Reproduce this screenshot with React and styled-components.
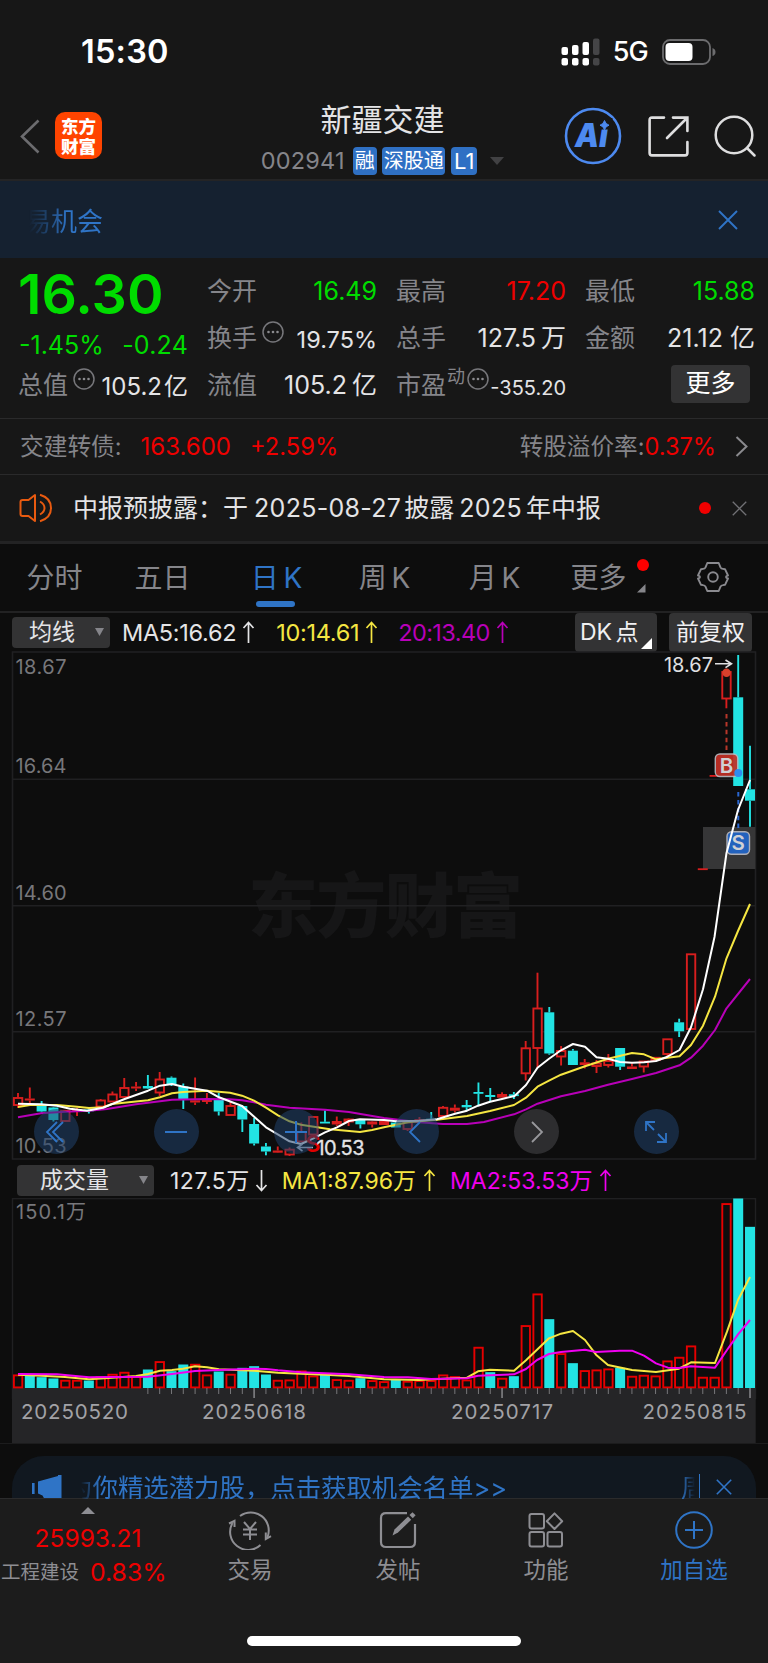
import React from 'react';
import styled, { createGlobalStyle } from 'styled-components';

const C = {
  green: '#00dc00',
  red: '#ee0000',
  grey: '#85858a',
  light: '#e4e4e6',
  blue: '#2f74c6',
  cyan: '#22e3e3',
  yellow: '#f5e642',
  purple: '#b800b8',
  magenta: '#f000f0',
};

const Global = createGlobalStyle`
  * { box-sizing: border-box; }
  body { margin: 0; background: #0d0d0d; }
  svg { display: block; flex: none; }
`;

const Page = styled.div`
  width: 768px;
  height: 1663px;
  overflow: hidden;
  display: flex;
  flex-direction: column;
  background: #0d0d0d;
  font-family: Inter, 'Noto Sans CJK SC', sans-serif;
  color: ${C.light};
`;

const Text = styled.span`
  display: block;
  flex: none;
  white-space: nowrap;
  font-size: ${(p) => p.$size}px;
  line-height: ${(p) => p.$line || 32}px;
  height: ${(p) => p.$line || 32}px;
  font-weight: ${(p) => p.$weight || 400};
  color: ${(p) => p.$color || C.light};
  letter-spacing: ${(p) => p.$ls || 0}px;
  margin: ${(p) => p.$margin || 0};
`;

/* ---------- status bar ---------- */
const StatusBar = styled.div`
  flex: none;
  height: 103px;
  padding: 0 51px 0 81px;
  display: flex;
  align-items: center;
  justify-content: space-between;
  background: #171717;
`;
const StatusIcons = styled.div`
  display: flex;
  align-items: center;
`;

/* ---------- header ---------- */
const Header = styled.div`
  flex: none;
  height: 78px;
  display: grid;
  grid-template-columns: 236px 293px 1fr;
  background: #171717;
  border-bottom: 2px solid #242425;
`;
const HeaderSide = styled.div`
  height: 66px;
  display: flex;
  align-items: center;
  gap: ${(p) => p.$gap}px;
  padding-left: ${(p) => p.$left}px;
`;
const Logo = styled.div`
  width: 47px;
  height: 47px;
  margin-top: -1px;
  border-radius: 10px;
  background: #ff4400;
  display: flex;
  flex-direction: column;
  align-items: center;
  padding-top: 4px;
  color: #fff;
  font: 900 17.5px/19.5px 'Noto Sans CJK SC', sans-serif;
`;
const TitleBlock = styled.div`
  display: flex;
  flex-direction: column;
  align-items: center;
`;
const CodeRow = styled.div`
  display: flex;
  align-items: center;
  height: 28px;
  margin-top: 11px;
`;
const Tag = styled.span`
  display: block;
  height: 28px;
  width: ${(p) => p.$w}px;
  border-radius: 4px;
  background: #2f70c4;
  color: #fff;
  text-align: center;
  font-size: ${(p) => p.$size || 20}px;
  line-height: 28px;
  margin-left: ${(p) => p.$left}px;
  overflow: hidden;
  white-space: nowrap;
`;

/* ---------- banner ---------- */
const Banner = styled.div`
  flex: none;
  height: 77px;
  padding: 0 30px 0 25px;
  display: flex;
  align-items: center;
  justify-content: space-between;
  background: #152130;
`;
const FadeText = styled.div`
  font-size: 26px;
  line-height: 36px;
  margin-top: 4px;
  color: ${C.blue};
  mask-image: linear-gradient(90deg, transparent 4px, rgba(0, 0, 0, 0.4) 22px, #000 42px);
`;

/* ---------- quote ---------- */
const Quote = styled.div`
  flex: none;
  height: 160px;
  padding: 9px 13px 0 19px;
  display: grid;
  grid-template-columns: repeat(4, 169px);
  column-gap: 20px;
  grid-template-rows: repeat(3, 47px);
  background: #171717;
`;
const PriceCell = styled.div`
  grid-row: span 2;
`;
const ChangeRow = styled.div`
  display: flex;
  justify-content: space-between;
  margin-top: 8px;
`;
const Cell = styled.div`
  display: flex;
  align-items: center;
  justify-content: space-between;
`;
const Label = styled.div`
  display: flex;
  align-items: center;
  font-size: 25px;
  line-height: 32px;
  color: ${C.grey};
  white-space: nowrap;
  margin-left: -1px;
`;
const Value = styled.div`
  display: flex;
  gap: ${(p) => p.$gap}px;
  margin-top: ${(p) => p.$drop || 0}px;
`;
const MoreButton = styled.div`
  width: 79px;
  height: 38px;
  margin: -2px 5px 0 auto;
  border-radius: 4px;
  background: #333334;
  color: #fff;
  font-size: 25px;
  line-height: 37px;
  text-align: center;
`;

const InfoRow = styled.div`
  flex: none;
  height: ${(p) => p.$h}px;
  border-top: 1px solid #2a2a2b;
  display: flex;
  align-items: center;
  padding: 0 ${(p) => p.$right}px 0 19px;
  background: #171717;
`;
const Grow = styled.div`
  flex: 1;
`;
const Spacer = styled.div`
  flex: none;
  width: ${(p) => p.$w}px;
`;

/* ---------- tabs ---------- */
const Tabs = styled.div`
  flex: none;
  height: 72px;
  border-top: 3px solid #232324;
  border-bottom: 2px solid #222223;
  display: grid;
  grid-template-columns: 109px 107px 121px 95px 125px 83px 1fr;
  background: #0d0d0d;
`;
const Tab = styled.div`
  position: relative;
  text-align: center;
  font-size: 28px;
  line-height: 68px;
  height: 67px;
  white-space: nowrap;
  word-spacing: -3px;
  color: ${(p) => (p.$on ? C.blue : C.grey)};
  &::after {
    content: '';
    display: ${(p) => (p.$on ? 'block' : 'none')};
    position: absolute;
    left: 50%;
    bottom: 4px;
    width: 39px;
    height: 6px;
    margin-left: -21px;
    border-radius: 3px;
    background: ${C.blue};
  }
`;
const TabExtras = styled.div`
  display: flex;
  margin-left: -4px;
  gap: 47px;
`;

/* ---------- indicator bars ---------- */
const IndicatorBar = styled.div`
  flex: none;
  height: 38px;
  display: flex;
  align-items: center;
  padding: ${(p) => p.$top || 0}px 16px 0 ${(p) => p.$left}px;
`;
const Picker = styled.div`
  flex: none;
  width: ${(p) => p.$w}px;
  height: 31px;
  border-radius: 4px;
  background: #333334;
  display: flex;
  align-items: center;
  justify-content: space-between;
  padding: 0 6px 0 ${(p) => p.$pad}px;
`;
const Chip = styled.div`
  flex: none;
  position: relative;
  width: ${(p) => p.$w}px;
  height: 39px;
  margin-left: ${(p) => p.$left || 0}px;
  border-radius: 4px;
  background: #333334;
  color: #f0f0f2;
  font-size: 23px;
  line-height: 39px;
  word-spacing: -3px;
  padding-left: ${(p) => p.$pad}px;
  white-space: nowrap;
  svg {
    position: absolute;
    right: 5px;
    bottom: 3px;
  }
`;

/* ---------- chart ---------- */
const ChartWrap = styled.div`
  flex: none;
  position: relative;
  height: ${(p) => p.$h}px;
`;
const Controls = styled.div`
  position: absolute;
  left: 33.5px;
  top: 458px;
  display: flex;
  gap: 75px;
`;
const Round = styled.div`
  width: 45px;
  height: 45px;
  border-radius: 50%;
  background: ${(p) => (p.$off ? 'rgba(48,48,50,.94)' : 'rgba(32,66,108,.55)')};
  display: flex;
  align-items: center;
  justify-content: center;
`;

/* ---------- bottom ---------- */
const AdSlot = styled.div`
  flex: none;
  height: 55px;
  border-top: 1px solid #1c1c1d;
  padding: 12px 12px 0;
`;
const Ad = styled.div`
  height: 43px;
  border-radius: 32px 32px 0 0;
  background: #111820;
  display: flex;
  align-items: flex-start;
  padding: 14px 24px 0 19px;
  overflow: hidden;
`;
const AdText = styled.div`
  height: 36px;
  flex: none;
  width: ${(p) => p.$w}px;
  margin-left: ${(p) => p.$left || 0}px;
  overflow: hidden;
  display: flex;
  font-size: 25.4px;
  line-height: 36px;
  white-space: nowrap;
  color: ${C.blue};
  justify-content: ${(p) => (p.$end ? 'flex-start' : 'flex-end')};
  mask-image: ${(p) =>
    p.$end ? 'linear-gradient(90deg,#000,transparent)' : 'linear-gradient(90deg,transparent,#000 18px)'};
`;
const Divider = styled.div`
  width: 1px;
  height: 30px;
  background: ${C.blue};
  margin: 4px 16px 0 4px;
`;
const AdClose = styled.div`
  margin-top: 9px;
`;
const BottomBar = styled.div`
  flex: none;
  height: 165px;
  border-top: 1px solid #2b2b2c;
  background: #1c1c1c;
  display: flex;
  flex-direction: column;
  justify-content: space-between;
  align-items: center;
  padding-bottom: 17px;
`;
const NavRow = styled.div`
  width: 768px;
  display: grid;
  grid-template-columns: 176px repeat(4, 148px);
`;
const NavItem = styled.div`
  display: flex;
  flex-direction: column;
  align-items: center;
  padding-top: 11px;
  font-size: 22.5px;
  line-height: 30px;
  gap: 5px;
  color: ${(p) => (p.$on ? C.blue : '#8e8e93')};
`;
const IndexItem = styled.div`
  display: flex;
  flex-direction: column;
  align-items: center;
  padding-top: 8px;
`;
const IndexRow = styled.div`
  display: flex;
  width: 100%;
  margin-top: 2px;
  padding-left: 1px;
`;
const HomeIndicator = styled.div`
  width: 274px;
  height: 10px;
  border-radius: 5px;
  background: #fff;
`;

/* ---------- icons ---------- */
const Close = ({ size, color, w = 2 }) => (
  <svg width={size} height={size} viewBox="0 0 20 20" stroke={color} strokeWidth={w} fill="none">
    <path d="M1 1L19 19M19 1L1 19" />
  </svg>
);
const Caret = ({ w = 9, h = 8, color = C.grey, up }) => (
  <svg width={w} height={h} viewBox="0 0 10 10" preserveAspectRatio="none">
    <path d={up ? 'M0 10L5 0L10 10Z' : 'M0 0H10L5 10Z'} fill={color} />
  </svg>
);
const Corner = ({ w = 11, color = '#fff' }) => (
  <svg width={w} height={w} viewBox="0 0 10 10">
    <path d="M10 0V10H0Z" fill={color} />
  </svg>
);
const DotsBox = styled.svg`
  margin: -11px 0 0 ${(p) => p.$left}px;
`;
const Dots = ({ left = 5 }) => (
  <DotsBox $left={left} width="22" height="22" viewBox="0 0 22 22">
    <circle cx="11" cy="11" r="10" fill="none" stroke="#77777b" strokeWidth="1.5" />
    {[6.5, 11, 15.5].map((x) => (
      <circle key={x} cx={x} cy="11" r="1.3" fill="#8a8a8e" />
    ))}
  </DotsBox>
);
const ArrowBox = styled.svg`
  margin-left: ${(p) => p.$left}px;
`;
const Arrow = ({ color, down, left = 4 }) => (
  <ArrowBox $left={left} width="13" height="23" viewBox="0 0 13 23" fill="none" stroke={color} strokeWidth="1.7">
    <path d={down ? 'M6.5 1V21M1.5 16L6.5 21.5L11.5 16' : 'M6.5 22V2M1.5 7L6.5 1.5L11.5 7'} />
  </ArrowBox>
);

const Battery = () => (
  <svg width="55" height="26" viewBox="0 0 55 26">
    <rect x="1" y="1" width="47" height="24" rx="7" fill="none" stroke="#6c6c6e" strokeWidth="1.8" />
    <rect x="3.5" y="4" width="27" height="18" rx="4" fill="#fff" />
    <path d="M50.5 9Q53.5 10 53.5 13T50.5 17Z" fill="#6c6c6e" />
  </svg>
);
const Signal = () => (
  <svg width="40" height="28" viewBox="0 0 40 28">
    {[0, 1, 2, 3].map((i) => {
      const top = [9, 7, 4, 0.5][i];
      const fill = i === 3 ? '#454547' : '#fff';
      return (
        <g key={i} fill={fill}>
          <rect x={0.5 + i * 10.5} y={top} width="6.5" height={17 - top} rx="2" />
          <rect x={0.5 + i * 10.5} y="20" width="6.5" height="7.5" rx="2" />
        </g>
      );
    })}
  </svg>
);
const AiBadge = () => (
  <svg width="58" height="58" viewBox="0 0 58 58">
    <circle cx="29" cy="29" r="27" fill="none" stroke="#4d8af0" strokeWidth="2.6" />
    <text x="11" y="40" fontFamily="Inter, sans-serif" fontWeight="900" fontStyle="italic" fontSize="33" fill="#4d8af0" textLength="33" lengthAdjust="spacingAndGlyphs">
      Ai
    </text>
    <rect x="33.5" y="11" width="15" height="11.5" fill="#171717" />
    <path d="M40.5 13.5Q41.5 17.2 45 18.2Q41.5 19.2 40.5 22.8Q39.5 19.2 36 18.2Q39.5 17.2 40.5 13.5Z" fill="#4d8af0" stroke="#4d8af0" />
  </svg>
);
const Share = () => (
  <svg width="41" height="41" viewBox="0 0 41 41" fill="none" stroke="#dededf" strokeWidth="2.6" strokeLinecap="round">
    <path d="M16 1.6H4Q1.6 1.6 1.6 4V37Q1.6 39.4 4 39.4H37Q39.4 39.4 39.4 37V26" />
    <path d="M25 1.6H39.4V15M39 2L19 22" />
  </svg>
);
const Search = () => (
  <svg width="43" height="43" viewBox="0 0 43 43" fill="none" stroke="#dededf" strokeWidth="2.5" strokeLinecap="round">
    <circle cx="20" cy="20" r="18.3" />
    <path d="M33 33L40.5 40.5" />
  </svg>
);
const Gear = () => (
  <svg width="32" height="32" viewBox="0 0 32 32" fill="none" stroke="#8a8a8f" strokeWidth="1.9" strokeLinejoin="round">
    <path d="M10.3 2H21.7L23.5 6.3Q24.2 7.7 26 7.9L28 8.2L31 14.5Q29 15 29 16T31 17.5L28 23.8L26 24.1Q24.2 24.3 23.5 25.7L21.7 30H10.3L8.5 25.7Q7.8 24.3 6 24.1L4 23.8L1 17.5Q3 17 3 16T1 14.5L4 8.2L6 7.9Q7.8 7.7 8.5 6.3Z" />
    <circle cx="16" cy="16" r="4.8" />
  </svg>
);
const Horn = () => (
  <svg width="34" height="30" viewBox="0 0 34 30" fill="none" stroke="#e85a10" strokeWidth="2" strokeLinejoin="round">
    <path d="M16 2V28L9.5 23H3.5Q1.5 23 1.5 21V9Q1.5 7 3.5 7H9.5Z" />
    <path d="M21 8.5Q25.5 11 25.5 15T21 21.5M21 1.8Q32 5 32 15T21 28.2" />
  </svg>
);
const Megaphone = () => (
  <svg width="32" height="30" viewBox="0 0 32 30" fill={C.blue}>
    <rect x="1" y="13" width="2.6" height="11" />
    <path d="M7 11.5L27 6V5H30.5V30H14L11.5 25.5L7 23.5Z" />
  </svg>
);
const Trade = () => (
  <svg width="44" height="40" viewBox="0 0 44 40" fill="none" stroke="currentColor" strokeWidth="2">
    <path d="M12 6A18 18 0 0 1 39.5 27M32.5 35A18 18 0 0 1 4.5 13" />
    <path d="M1 13.5L6.5 10.8V17M43 26.2L37.8 29V22.5" />
    <path d="M16 12L22 19L28 12M22 19V30M15 19.5H29M15 24.5H29" />
  </svg>
);
const Post = () => (
  <svg width="40" height="40" viewBox="0 0 40 40" fill="none" stroke="currentColor" strokeWidth="2.2">
    <path d="M29 3.2H8Q3 3.2 3 8V32Q3 37 8 37H32Q37 37 37 32V14" />
    <path d="M14.5 25.5L16.5 19.5L30 6.5L33.2 9.8L20 22.5Z" fill="currentColor" stroke="none" />
    <path d="M31.5 5L34.5 2.2L37.6 5.2L34.8 8.2Z" fill="currentColor" stroke="none" />
  </svg>
);
const Grid4 = () => (
  <svg width="38" height="40" viewBox="0 0 38 40" fill="none" stroke="currentColor" strokeWidth="2">
    <rect x="2.5" y="4" width="14.5" height="14.5" rx="2" />
    <rect x="2.5" y="22" width="14.5" height="14.5" rx="2" />
    <rect x="20.5" y="22" width="14.5" height="14.5" rx="2" />
    <path d="M27.5 3.4L35.2 11.2L27.5 19L19.8 11.2Z" strokeLinejoin="round" />
  </svg>
);
const AddCircle = () => (
  <svg width="40" height="40" viewBox="0 0 40 40" fill="none" stroke="currentColor" strokeWidth="2">
    <circle cx="20" cy="20" r="17.8" />
    <path d="M20 11V29M11 20H29" />
  </svg>
);

/* ---------- chart data: [kind, body top, body bottom, wick top, wick bottom] ----------
   h = hollow rising, r = solid rising, c = falling */
const CANDLES = [
  ['h', 1098, 1105, 1093, 1108], ['r', 1098.5, 1100.5, 1087.5, 1103], ['c', 1105, 1111.5, 1101, 1112.5],
  ['c', 1107.5, 1120, 1107, 1121.5], ['h', 1110.8, 1121, 1110, 1121], ['r', 1109.5, 1111, 1108, 1116],
  ['c', 1109.5, 1111, 1108, 1113.5], ['h', 1100.5, 1106.5, 1099, 1107], ['h', 1094.5, 1101.5, 1091.5, 1102],
  ['h', 1088, 1097, 1078, 1097], ['r', 1086.5, 1088.5, 1082, 1091], ['c', 1086, 1088.5, 1075, 1089],
  ['h', 1079.5, 1092.5, 1072, 1096], ['c', 1077.7, 1085, 1076.5, 1086], ['c', 1086.5, 1099, 1083.5, 1109],
  ['r', 1100.3, 1102.5, 1077.5, 1105], ['r', 1099, 1102, 1093, 1104], ['c', 1100, 1111.5, 1093, 1115.5],
  ['h', 1106, 1115, 1102, 1115], ['c', 1106, 1119.5, 1105, 1132], ['c', 1124, 1143.5, 1118, 1145.5],
  ['c', 1146.5, 1151.5, 1143, 1155.3], ['r', 1150.5, 1152.7, 1146.5, 1153], ['h', 1149.7, 1154.5, 1147.5, 1156],
  ['h', 1132, 1141.5, 1122.5, 1142], ['h', 1117, 1134.5, 1117, 1134.5], ['c', 1121.7, 1123.5, 1110.5, 1123.5],
  ['r', 1121, 1124.5, 1116.5, 1126], ['h', 1119.5, 1121.5, 1118.5, 1126], ['c', 1120, 1124.3, 1120, 1128.5],
  ['r', 1121.5, 1124.5, 1121, 1127.5], ['r', 1121, 1125, 1120, 1125], ['c', 1122.5, 1127.5, 1122, 1127.5],
  ['h', 1122.5, 1129, 1122, 1131], ['r', 1119, 1121, 1117, 1121], ['c', 1118.7, 1120.3, 1112, 1121],
  ['h', 1107.8, 1116, 1106, 1116], ['r', 1107.7, 1110.7, 1104.5, 1112.5], ['c', 1105, 1107.3, 1100, 1110],
  ['c', 1092, 1093.5, 1082.5, 1106], ['c', 1095, 1097, 1088, 1101.5], ['r', 1094, 1097.7, 1092.3, 1098],
  ['c', 1094.3, 1096, 1092, 1099], ['h', 1048.3, 1073.3, 1041, 1080.5], ['h', 1008.5, 1048, 972.7, 1068],
  ['c', 1012.3, 1053.5, 1007, 1054.7], ['h', 1051, 1056.5, 1046, 1065.5], ['c', 1050.7, 1065, 1049, 1065],
  ['r', 1062.3, 1065, 1059, 1068.5], ['h', 1063.5, 1066, 1060, 1073], ['h', 1061, 1065, 1054, 1067.5],
  ['c', 1048, 1066.7, 1048, 1070], ['r', 1066.5, 1069, 1063.3, 1069], ['h', 1061.5, 1066.5, 1061, 1072.5],
  ['h', 1057.8, 1060, 1057.5, 1060], ['h', 1039.3, 1054, 1039, 1056], ['c', 1022.3, 1031.3, 1018.7, 1037],
  ['h', 954.3, 1029, 954.3, 1029], ['r', 868.3, 870, 868.3, 870], ['r', 775, 776.3, 775, 776.3],
  ['h', 672, 698.5, 670, 708.3], ['c', 697.3, 786, 655, 786], ['c', 789.3, 800.7, 745.7, 826.7],
];

const MA5 = [
  [18, 1103.7], [41, 1104.3], [57, 1105.7], [70, 1108.7], [87, 1110.7], [103, 1107.7], [124, 1099.3], [148, 1090.7],
  [160, 1085.7], [172, 1084], [183, 1086.7], [207, 1090.7], [219, 1097.3], [242, 1106], [266, 1127.3], [289.5, 1141.3],
  [301, 1144], [313, 1138.7], [325, 1132.3], [337, 1127.3], [349, 1121], [360, 1119.3], [384, 1120], [396, 1121.3],
  [419, 1120.7], [437, 1119.3], [455, 1113.7], [467, 1110.7], [478, 1105.7], [490, 1101.7], [502, 1099], [514.5, 1096],
  [526, 1085], [537.5, 1067.7], [549, 1058.7], [561, 1050.3], [573, 1044], [585, 1046.7], [596.5, 1057.3], [608, 1058.7],
  [620, 1062], [632, 1062.7], [644, 1062.3], [656, 1061], [667.5, 1056.7], [679.5, 1050], [691, 1027.3], [703, 989.3],
  [714.5, 937], [726.5, 853], [738, 810], [750, 780],
];
const MA10 = [
  [18, 1107], [30, 1105], [57, 1105], [77, 1106.7], [89, 1108], [103, 1107.3], [112, 1104], [148, 1100.3], [160, 1097.3],
  [172, 1093.3], [183, 1092], [207, 1090.7], [230, 1092.7], [242, 1095.7], [254, 1100.7], [266, 1107.7], [278, 1115.3],
  [289.5, 1121.3], [301, 1124.7], [330, 1129.3], [360, 1132], [372, 1130], [384, 1127.3], [408, 1122.3], [437, 1119.7],
  [467, 1116], [490, 1111], [514, 1105], [526, 1097.7], [537.5, 1086.7], [549, 1080.7], [561, 1074.7], [585, 1066.3],
  [608, 1058.7], [632, 1053], [644, 1054.3], [656, 1059.3], [667.5, 1057.7], [679.5, 1056.3], [691, 1045], [703, 1025.7],
  [715, 996.7], [726.5, 958.3], [738, 931], [750, 904],
];
const MA20 = [
  [18, 1117.3], [41, 1113.3], [65, 1111.7], [89, 1110.7], [107, 1109], [136, 1104.3], [160, 1101.3], [172, 1099.7],
  [207, 1099], [230, 1099.3], [242, 1100.3], [254, 1102.3], [266, 1104.7], [289.5, 1107.7], [325, 1109.7], [349, 1112],
  [384, 1118], [419, 1122.3], [443, 1124], [467, 1124], [484, 1122], [514, 1114.3], [526, 1109.3], [537.5, 1103.7],
  [561, 1096.3], [585, 1091], [608, 1084.7], [632, 1079], [656, 1073], [679.5, 1065.3], [691, 1057.7], [703, 1045.7],
  [715, 1030], [726.5, 1008.3], [750, 979],
];

/* bar tops in thirds of a pixel below the 1180 line, base at 624 */
const VOLUMES =
  'r585 c588 c593 c597 r601 r601 c603 r590 r583 r577 r590 c570 r545 c575 c555 r553 r585 c576 r583 c565 c560 c585 r601 r600 r573 r588 c585 r599 r601 c596 r602 r605 c600 r604 r602 r602 r585 r590 r600 r502 c578 r595 c590 r437 r342 c419 r521 c551 r572 r570 r567 c565 r589 r586 r588 r543 r532 r498 r592 r592 r71 c57 c142'
    .split(' ')
    .map((s) => [s[0], 1180 + Number(s.slice(1)) / 3]);
const VMA5 = [
  [18, 584], [41, 587], [65, 591], [89, 598], [112, 593], [136, 588], [148, 582], [160, 572], [172, 570], [183, 566],
  [195, 559], [207, 562], [219, 568], [254, 572], [278, 578], [301, 581], [325, 584], [349, 588], [384, 598], [419, 600],
  [443, 596], [467, 593], [478, 574], [490, 569], [514, 572], [526, 541], [549, 475], [561, 461], [573, 453], [585, 480],
  [596, 524], [608, 555], [632, 570], [656, 576], [679, 566], [691, 547], [715, 549], [727, 455], [738, 360], [750, 291],
].map(([x, y]) => [x, 1180 + y / 3]);
const VMA10 = [
  [18, 582], [57, 583], [89, 592], [112, 591], [148, 590], [172, 582], [195, 573], [219, 570], [254, 566], [266, 567],
  [278, 571], [301, 577], [349, 583], [384, 591], [408, 592], [431, 597], [467, 595], [478, 587], [514, 583], [526, 567],
  [537, 540], [549, 522], [561, 516], [585, 509], [596, 516], [620, 512], [632, 512], [644, 527], [656, 550], [668, 563],
  [679, 564], [691, 559], [715, 563], [727, 510], [738, 463], [750, 420],
].map(([x, y]) => [x, 1180 + y / 3]);

const STEP = 732 / 62;
const cx = (i) => 18 + i * STEP;
const pts = (list) => list.map((p) => p.join(',')).join(' ');
const Line = ({ data, color }) => (
  <polyline points={pts(data)} fill="none" stroke={color} strokeWidth="2" strokeLinejoin="round" />
);

const Candle = ({ i, d: [kind, t, b, wt, wb] }) => {
  const x = cx(i);
  const col = kind === 'c' ? C.cyan : '#d81e1e';
  const h = Math.max(b - t, 1.8);
  return (
    <g stroke={col}>
      {wt < t && <path d={`M${x} ${wt}V${t}`} strokeWidth="1.9" />}
      {wb > b && <path d={`M${x} ${b}V${wb}`} strokeWidth="1.9" />}
      {kind === 'h' ? (
        <rect x={x - 4.1} y={t} width="8.4" height={h} fill="#0d0d0d" strokeWidth="1.9" />
      ) : (
        <rect x={x - 5} y={t} width="10" height={h} fill={col} stroke="none" />
      )}
    </g>
  );
};

const Badge = ({ x, y, color, children }) => (
  <g>
    <rect x={x} y={y} width="22.5" height="22.5" rx="4.5" fill={color} stroke="#b9b9c0" strokeWidth="1.4" opacity=".93" />
    <text x={x + 11.25} y={y + 18.6} textAnchor="middle" fontSize="20.5" fontWeight="600" fill="#d0d0d4">
      {children}
    </text>
  </g>
);

const PriceChart = () => (
  <svg width="768" height="509" viewBox="0 651 768 509" fontFamily="Inter, 'Noto Sans CJK SC', sans-serif">
    <g fill="#161617" fontFamily="'Noto Sans CJK SC', sans-serif" fontWeight="900" fontSize="70">
      <text x="248" y="931.5" textLength="275">东方财富</text>
    </g>
    <g stroke="#202022" strokeWidth="1.6" fill="none">
      <rect x="12.5" y="652" width="743" height="507" />
      <path d="M12.5 779.3H755.5M12.5 905.7H755.5M12.5 1031.8H755.5" />
    </g>
    <g fill="#77777b" fontSize="20">
      {[[18.67, 673.5], [16.64, 773], [14.6, 899.5], [12.57, 1026.3], [10.53, 1153]].map(([v, y]) => (
        <text key={v} x="15.5" y={y} textLength="51">{v.toFixed(2)}</text>
      ))}
    </g>
    <rect x="703" y="827" width="52.3" height="42" fill="#363637" />
    {CANDLES.map((d, i) => (
      <Candle key={i} i={i} d={d} />
    ))}
    <path d="M726.5 714V751" stroke="#b8372a" strokeWidth="2" strokeDasharray="4.5 3.4" />
    <path d="M738.3 792V829" stroke="#2a66d0" strokeWidth="2" strokeDasharray="4.5 3.4" />
    <circle cx="726.5" cy="672.7" r="4.2" fill="#d8402c" />
    <Badge x={715.3} y={754} color="#c23026">B</Badge>
    <Line data={MA20} color={C.purple} />
    <Line data={MA10} color={C.yellow} />
    <circle cx="738.3" cy="773" r="4" fill="#2f8cf0" />
    <Badge x={727} y={831.8} color="#2266c8">S</Badge>
    <Line data={MA5} color="#fff" />
    <text x="664" y="671.5" fontSize="20" fill="#e0e0e2" textLength="49">18.67</text>
    <path d="M715 663.8H731M725.5 660L731.5 663.8L725.5 667.6" fill="none" stroke="#e0e0e2" strokeWidth="1.6" />
    <text x="305.5" y="1152" fontSize="23" fontWeight="600" fill="#e00000">S</text>
    <text x="316.5" y="1155.3" fontSize="20" fill="#e4e4e6" stroke="#e4e4e6" strokeWidth=".3" textLength="48">10.53</text>
    <path d="M298 1147.5H313M302.5 1144L297.5 1147.5L302.5 1151" fill="none" stroke="#c4ccd8" strokeWidth="1.6" />
  </svg>
);

const VolumeChart = () => (
  <svg width="768" height="245" viewBox="0 1198 768 245" fontFamily="Inter, 'Noto Sans CJK SC', sans-serif">
    <rect x="12.5" y="1198.7" width="743" height="200" fill="none" stroke="#202022" strokeWidth="1.4" />
    <rect x="12" y="1388" width="743.7" height="55" fill="#252527" />
    <text x="16" y="1218.5" fontSize="20" fill="#77777b" textLength="70">150.1万</text>
    {VOLUMES.map(([k, y], i) =>
      k === 'c' ? (
        <rect key={i} x={cx(i) - 5} y={y - 0.5} width="10" height={1388.5 - y} fill={C.cyan} />
      ) : (
        <rect key={i} x={cx(i) - 4.1} y={y + 0.4} width="8.4" height={1387 - y} fill="#0d0d0d" stroke="#e60000" strokeWidth="1.9" />
      ),
    )}
    <Line data={VMA5} color={C.yellow} />
    <Line data={VMA10} color={C.magenta} />
    {VOLUMES.map((_, i) =>
      i < 11 ? null : (
        <path key={i} d={`M${cx(i)} 1388V${[20, 41, 62].includes(i) ? 1398 : 1394}`} stroke="#77777a" strokeWidth={[20, 41, 62].includes(i) ? 1.8 : 1} />
      ),
    )}
    <g fill="#a2a2a6" fontSize="20.5">
      <text x="21" y="1418.7" textLength="107">20250520</text>
      <text x="202" y="1418.7" textLength="104">20250618</text>
      <text x="451" y="1418.7" textLength="102">20250717</text>
      <text x="642.5" y="1418.7" textLength="104">20250815</text>
    </g>
  </svg>
);

const Stat = ({ label, value, unit, gap = 5, drop = 1, color, dots, size = 25 }) => (
  <Cell>
    <Label>
      {label}
      {dots && <Dots />}
    </Label>
    <Value $gap={gap} $drop={drop}>
      <Text $size={size} $color={color}>{value}</Text>
      {unit && <Text $size={size}>{unit}</Text>}
    </Value>
  </Cell>
);

export default function App() {
  return (
    <Page>
      <Global />
      <StatusBar>
        <Text $size={32.5} $weight={600} $color="#fff" $line={40} $ls={0.2}>15:30</Text>
        <StatusIcons>
          <Signal />
          <Text $size={27} $weight={500} $color="#fff" $margin="0 14px 0 12px" $ls={-0.8}>5G</Text>
          <Battery />
        </StatusIcons>
      </StatusBar>

      <Header>
        <HeaderSide $left={20} $gap={15}>
          <svg width="20" height="35" viewBox="0 0 20 35" fill="none" stroke="#6c6c6f" strokeWidth="2.6">
            <path d="M18.5 1.5L2 17.5L18.5 33.5" />
          </svg>
          <Logo>
            <span>东方</span>
            <span>财富</span>
          </Logo>
        </HeaderSide>
        <TitleBlock>
          <Text $size={31} $line={33}>新疆交建</Text>
          <CodeRow>
            <Text $size={23.5} $color={C.grey} $ls={0.2}>002941</Text>
            <Tag $w={24} $left={8}>融</Tag>
            <Tag $w={63} $left={5.5}>深股通</Tag>
            <Tag $w={26} $left={6} $size={22}>L1</Tag>
            <Spacer $w={13} />
            <Caret w={14} h={8} color="#414143" />
          </CodeRow>
        </TitleBlock>
        <HeaderSide $left={35} $gap={25.5}>
          <AiBadge />
          <Share />
          <Search />
        </HeaderSide>
      </Header>

      <Banner>
        <FadeText>易机会</FadeText>
        <Close size={20} color={C.blue} w={1.9} />
      </Banner>

      <Quote>
        <PriceCell>
          <Text $size={55.5} $line={54} $weight={600} $color={C.green} $margin="0 0 0 -1px">16.30</Text>
          <ChangeRow>
            <Text $size={25} $color={C.green}>-1.45%</Text>
            <Text $size={25} $color={C.green} $ls={0.2}>-0.24</Text>
          </ChangeRow>
        </PriceCell>
        <Stat label="今开" value="16.49" color={C.green} />
        <Stat label="最高" value="17.20" color={C.red} />
        <Stat label="最低" value="15.88" color={C.green} />
        <Stat label="换手" value="19.75%" size={23.5} drop={4} dots />
        <Stat label="总手" value="127.5" unit="万" />
        <Stat label="金额" value="21.12" unit="亿" gap={7} />
        <Stat label="总值" value="105.2" unit="亿" gap={2} size={24} drop={4} dots />
        <Stat label="流值" value="105.2" unit="亿" />
        <Cell>
          <Label>
            市盈
            <Text $size={18} $color={C.grey} $margin="-16px 0 0 1px">动</Text>
            <Dots left={2} />
          </Label>
          <Text $size={20} $margin="7px 0 0">-355.20</Text>
        </Cell>
        <Cell>
          <MoreButton>更多</MoreButton>
        </Cell>
      </Quote>

      <InfoRow $h={56} $right={20}>
        <Text $size={23.7} $color={C.grey} $margin="0 0 0 1px">交建转债:</Text>
        <Text $size={24} $color={C.red} $margin="0 19px 0 19px">163.600</Text>
        <Text $size={23.7} $color={C.red}>+2.59%</Text>
        <Grow />
        <Text $size={23.6} $color={C.grey}>转股溢价率:</Text>
        <Text $size={23.6} $color={C.red} $margin="0 19px 0 0">0.37%</Text>
        <svg width="13" height="21" viewBox="0 0 13 21" fill="none" stroke="#8a8a8e" strokeWidth="2">
          <path d="M1.5 1L11.5 10.5L1.5 20" />
        </svg>
      </InfoRow>
      <InfoRow $h={67} $right={21}>
        <Horn />
        <Text $size={25} $margin="0 0 0 20px">中报预披露：于</Text>
        <Text $size={25} $margin="0 3px 0 6px" $ls={0.3}>2025-08-27</Text>
        <Text $size={25}>披露</Text>
        <Text $size={25} $margin="0 4px 0 5px" $ls={0.3}>2025</Text>
        <Text $size={25}>年中报</Text>
        <Grow />
        <svg width="12" height="12"><circle cx="6" cy="6" r="6" fill="#f00000" /></svg>
        <Spacer $w={21} />
        <Close size={15} color="#717175" w={1.8} />
      </InfoRow>

      <Tabs>
        <Tab>分时</Tab>
        <Tab>五日</Tab>
        <Tab $on>日 K</Tab>
        <Tab>周 K</Tab>
        <Tab>月 K</Tab>
        <Tab>更多</Tab>
        <TabExtras>
          <svg width="14" height="66" viewBox="0 0 14 66">
            <circle cx="7" cy="21" r="6" fill="#ff0000" />
            <path d="M9.5 40V48.5H1Z" fill={C.grey} />
          </svg>
          <svg width="32" height="66" viewBox="0 -17 32 66"><Gear /></svg>
        </TabExtras>
      </Tabs>

      <IndicatorBar $left={12}>
        <Picker $w={98} $pad={17}>
          <Text $size={23}>均线</Text>
          <Caret />
        </Picker>
        <Text $size={23.5} $ls={-0.3} $margin="2px 0 0 12px">MA5:16.62</Text>
        <Arrow color={C.light} left={6} />
        <Text $size={23.5} $ls={-0.3} $color={C.yellow} $margin="2px 0 0 21px">10:14.61</Text>
        <Arrow color={C.yellow} left={6} />
        <Text $size={23.5} $ls={-0.6} $color={C.purple} $margin="2px 0 0 20px">20:13.40</Text>
        <Arrow color={C.purple} left={6} />
        <Grow />
        <Chip $w={82} $pad={5}>DK 点<Corner /></Chip>
        <Chip $w={83} $pad={7} $left={12}>前复权</Chip>
      </IndicatorBar>

      <ChartWrap $h={509}>
        <PriceChart />
        <Controls>
          <Round>
            <svg width="24" height="24" viewBox="0 0 24 24" fill="none" stroke={C.blue} strokeWidth="1.8">
              <path d="M13 2L3 12L13 22M19 2L9 12L19 22" />
            </svg>
          </Round>
          <Round>
            <svg width="24" height="24" viewBox="0 0 24 24" stroke={C.blue} strokeWidth="2"><path d="M1 12H23" /></svg>
          </Round>
          <Round>
            <svg width="24" height="24" viewBox="0 0 24 24" stroke={C.blue} strokeWidth="2"><path d="M1 12H23M12 1V23" /></svg>
          </Round>
          <Round>
            <svg width="24" height="24" viewBox="0 0 24 24" fill="none" stroke={C.blue} strokeWidth="1.8"><path d="M16 2L6 12L16 22" /></svg>
          </Round>
          <Round $off>
            <svg width="24" height="24" viewBox="0 0 24 24" fill="none" stroke="#98989c" strokeWidth="1.8"><path d="M8 2L18 12L8 22" /></svg>
          </Round>
          <Round>
            <svg width="24" height="24" viewBox="0 0 24 24" fill="none" stroke={C.blue} strokeWidth="1.8">
              <path d="M2 11V2H11M2 2L10 10M22 13V22H13M22 22L14 14" />
            </svg>
          </Round>
        </Controls>
      </ChartWrap>

      <IndicatorBar $left={17} $top={2}>
        <Picker $w={137} $pad={23}>
          <Text $size={23}>成交量</Text>
          <Caret />
        </Picker>
        <Text $size={23} $ls={0.5} $margin="1px 0 0 16px">127.5万</Text>
        <Arrow color={C.light} down left={5} />
        <Text $size={23} $color={C.yellow} $margin="1px 0 0 14px">MA1:87.96万</Text>
        <Arrow color={C.yellow} left={7} />
        <Text $size={23} $color={C.magenta} $margin="1px 0 0 14px">MA2:53.53万</Text>
        <Arrow color={C.magenta} left={6} />
      </IndicatorBar>

      <ChartWrap $h={245}>
        <VolumeChart />
      </ChartWrap>

      <AdSlot>
        <Ad>
          <Megaphone />
          <AdText $w={426} $left={18}>为你精选潜力股，点击获取机会名单&gt;&gt;</AdText>
          <Grow />
          <AdText $w={14} $end>周</AdText>
          <Divider />
          <AdClose>
            <Close size={16} color={C.blue} w={2} />
          </AdClose>
        </Ad>
      </AdSlot>

      <BottomBar>
        <NavRow>
          <IndexItem>
            <Caret up w={14} h={7} color="#8e8e93" />
            <Text $size={24.5} $color={C.red} $margin="8px 0 0">25993.21</Text>
            <IndexRow>
              <Text $size={19.5} $color="#8e8e93">工程建设</Text>
              <Text $size={24.8} $color={C.red} $margin="0 0 0 11px">0.83%</Text>
            </IndexRow>
          </IndexItem>
          <NavItem><Trade />交易</NavItem>
          <NavItem><Post />发帖</NavItem>
          <NavItem><Grid4 />功能</NavItem>
          <NavItem $on><AddCircle />加自选</NavItem>
        </NavRow>
        <HomeIndicator />
      </BottomBar>
    </Page>
  );
}
